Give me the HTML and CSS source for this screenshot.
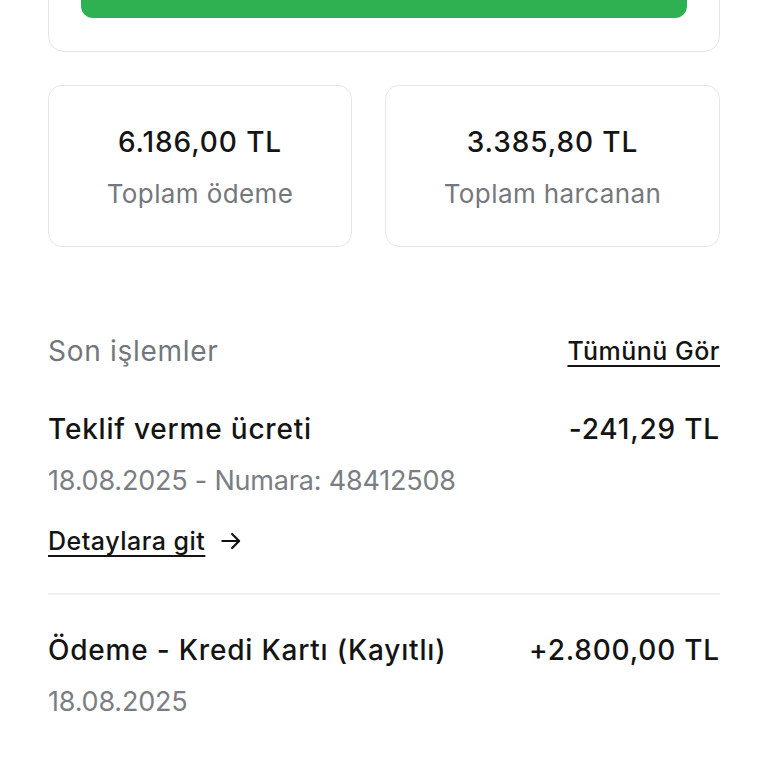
FILE: index.html
```html
<!DOCTYPE html>
<html>
    <head>
        <meta charset="utf-8">
        <meta name="viewport" content="width=device-width, initial-scale=1">
        <link rel="stylesheet" href="styles.css">
    </head>

    <body>
        <div class="page">
            <!-- top card with pay button -->
            <div class="top-card">
                <div class="pay-btn"></div>
            </div>

            <!-- totals -->
            <div class="stats">
                <div class="stat">
                    <div class="stat-value">6.186,00 TL</div>
                    <div class="stat-label">Toplam ödeme</div>
                </div>
                <div class="stat">
                    <div class="stat-value">3.385,80 TL</div>
                    <div class="stat-label">Toplam harcanan</div>
                </div>
            </div>

            <!-- last transactions -->
            <div class="section-head">
                <span class="section-title">Son işlemler</span>
                <a href="#" class="see-all">Tümünü Gör</a>
            </div>

            <div class="tx">
                <div class="tx-row">
                    <span class="tx-title">Teklif verme ücreti</span>
                    <span class="tx-amount">-241,29 TL</span>
                </div>
                <div class="tx-sub">18.08.2025 - Numara: 48412508</div>
                <a href="#" class="tx-link">
                    <span class="tx-link-text">Detaylara git</span>
                    <svg width="26" height="26" viewBox="0 0 24 24" fill="none" stroke="#111" stroke-width="2" stroke-linecap="round" stroke-linejoin="round">
                        <path d="M4 12h15"/>
                        <path d="M13 5.5l6.5 6.5-6.5 6.5"/>
                    </svg>
                </a>
            </div>

            <div class="tx tx-last">
                <div class="tx-row">
                    <span class="tx-title">Ödeme - Kredi Kartı (Kayıtlı)</span>
                    <span class="tx-amount">+2.800,00 TL</span>
                </div>
                <div class="tx-sub">18.08.2025</div>
            </div>
        </div>
    </body>
</html>
```

FILE: styles.css
```css
* {box-sizing: border-box}

body {
  margin: 0;
  background: #fff;
  font-family: Inter, Roboto, sans-serif;
  color: #141414;
}

.page {
  padding: 0 48px;
}

/* top card */
.top-card {
  margin-top: -70px;
  padding: 33px 32px;
  border: 1px solid #e6e6e6;
  border-radius: 16px;
}

.pay-btn {
  height: 54px;
  background: #2fb152;
  border-radius: 12px;
}

/* totals */
.stats {
  display: flex;
  gap: 33px;
  margin-top: 33px;
}

.stat {
  flex: 1 1 auto;
  padding: 39px 10px 37px;
  border: 1px solid #e6e6e6;
  border-radius: 14px;
  text-align: center;
}

.stat-value {
  font-size: 28px;
  line-height: 34px;
  font-weight: 500;
  letter-spacing: 0.9px;
}

.stat-label {
  margin-top: 20px;
  font-size: 26px;
  line-height: 30px;
  letter-spacing: 0.4px;
  color: #74787e;
}

/* section header */
.section-head {
  display: flex;
  justify-content: space-between;
  align-items: center;
  margin-top: 88px;
  height: 32px;
}

.section-title {
  font-size: 28px;
  letter-spacing: 0.7px;
  color: #72767c;
}

.see-all {
  font-size: 25px;
  font-weight: 500;
  letter-spacing: 0.5px;
  color: #141414;
  text-decoration: underline;
  text-decoration-thickness: 1.5px;
  text-underline-offset: 5px;
}

/* transactions */
.tx {
  padding: 45px 0 37px;
  border-bottom: 2px solid #efefef;
}

.tx + .tx {
  padding-top: 38px;
}

.tx-last {
  border-bottom: none;
}

.tx-row {
  display: flex;
  justify-content: space-between;
  font-size: 28px;
  line-height: 34px;
  font-weight: 500;
  letter-spacing: 0.8px;
}

.tx-sub {
  margin-top: 20px;
  font-size: 27px;
  line-height: 30px;
  letter-spacing: -0.2px;
  color: #7a7e84;
}

.tx-link {
  display: flex;
  align-items: center;
  gap: 13px;
  margin-top: 30px;
  height: 30px;
  color: #141414;
  text-decoration: none;
}

.tx-link-text {
  font-size: 25px;
  font-weight: 500;
  letter-spacing: 0.5px;
  text-decoration: underline;
  text-decoration-thickness: 1.5px;
  text-underline-offset: 5px;
}
```
